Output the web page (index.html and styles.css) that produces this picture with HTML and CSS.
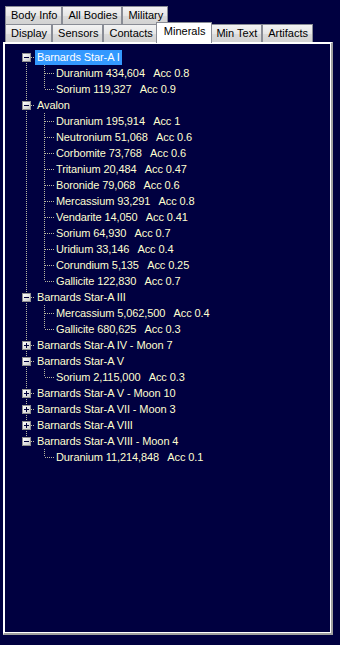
FILE: index.html
```html
<!DOCTYPE html>
<html lang="en">
<head>
    <meta charset="UTF-8" />
    <title>System View - Minerals</title>
    <link rel="stylesheet" href="styles.css">
</head>
<body>
<div class="tabs">
    <div class="tab-row">
        <div class="tab">Body Info</div>
        <div class="tab">All Bodies</div>
        <div class="tab">Military</div>
    </div>
    <div class="tab-row">
        <div class="tab">Display</div>
        <div class="tab">Sensors</div>
        <div class="tab">Contacts</div>
        <div class="tab active">Minerals</div>
        <div class="tab">Min Text</div>
        <div class="tab">Artifacts</div>
    </div>
</div>

<div class="page">
    <div class="tree-box">
        <ul class="tree">
            <li class="node">
                <div class="row"><span class="box minus"></span><span class="stub"></span><span class="label selected">Barnards Star-A I</span></div>
                <ul class="kids">
                    <li class="leaf"><span class="stub"></span><span class="label">Duranium 434,604   Acc 0.8</span></li>
                    <li class="leaf"><span class="stub"></span><span class="label">Sorium 119,327   Acc 0.9</span></li>
                </ul>
            </li>
            <li class="node">
                <div class="row"><span class="box minus"></span><span class="stub"></span><span class="label">Avalon</span></div>
                <ul class="kids">
                    <li class="leaf"><span class="stub"></span><span class="label">Duranium 195,914   Acc 1</span></li>
                    <li class="leaf"><span class="stub"></span><span class="label">Neutronium 51,068   Acc 0.6</span></li>
                    <li class="leaf"><span class="stub"></span><span class="label">Corbomite 73,768   Acc 0.6</span></li>
                    <li class="leaf"><span class="stub"></span><span class="label">Tritanium 20,484   Acc 0.47</span></li>
                    <li class="leaf"><span class="stub"></span><span class="label">Boronide 79,068   Acc 0.6</span></li>
                    <li class="leaf"><span class="stub"></span><span class="label">Mercassium 93,291   Acc 0.8</span></li>
                    <li class="leaf"><span class="stub"></span><span class="label">Vendarite 14,050   Acc 0.41</span></li>
                    <li class="leaf"><span class="stub"></span><span class="label">Sorium 64,930   Acc 0.7</span></li>
                    <li class="leaf"><span class="stub"></span><span class="label">Uridium 33,146   Acc 0.4</span></li>
                    <li class="leaf"><span class="stub"></span><span class="label">Corundium 5,135   Acc 0.25</span></li>
                    <li class="leaf"><span class="stub"></span><span class="label">Gallicite 122,830   Acc 0.7</span></li>
                </ul>
            </li>
            <li class="node">
                <div class="row"><span class="box minus"></span><span class="stub"></span><span class="label">Barnards Star-A III</span></div>
                <ul class="kids">
                    <li class="leaf"><span class="stub"></span><span class="label">Mercassium 5,062,500   Acc 0.4</span></li>
                    <li class="leaf"><span class="stub"></span><span class="label">Gallicite 680,625   Acc 0.3</span></li>
                </ul>
            </li>
            <li class="node">
                <div class="row"><span class="box plus"></span><span class="stub"></span><span class="label">Barnards Star-A IV - Moon 7</span></div>
            </li>
            <li class="node">
                <div class="row"><span class="box minus"></span><span class="stub"></span><span class="label">Barnards Star-A V</span></div>
                <ul class="kids">
                    <li class="leaf"><span class="stub"></span><span class="label">Sorium 2,115,000   Acc 0.3</span></li>
                </ul>
            </li>
            <li class="node">
                <div class="row"><span class="box plus"></span><span class="stub"></span><span class="label">Barnards Star-A V - Moon 10</span></div>
            </li>
            <li class="node">
                <div class="row"><span class="box plus"></span><span class="stub"></span><span class="label">Barnards Star-A VII - Moon 3</span></div>
            </li>
            <li class="node">
                <div class="row"><span class="box plus"></span><span class="stub"></span><span class="label">Barnards Star-A VIII</span></div>
            </li>
            <li class="node">
                <div class="row"><span class="box minus"></span><span class="stub"></span><span class="label">Barnards Star-A VIII - Moon 4</span></div>
                <ul class="kids">
                    <li class="leaf"><span class="stub"></span><span class="label">Duranium 11,214,848   Acc 0.1</span></li>
                </ul>
            </li>
        </ul>
    </div>
</div>
</body>
</html>
```

FILE: styles.css
```css
:root {
    --bg: #000040;
    --text: #ffffd0;
    --dots: #b8b8a0;
    --tab-border: #898c95;
}

* {
    box-sizing: border-box;
    margin: 0;
    padding: 0;
}

body {
    font-family: "Liberation Sans", Arial, sans-serif;
    font-size: 11px;
    background: var(--bg);
    color: var(--text);
    height: 645px;
    padding-top: 6px;
    overflow: hidden;
}

/* tab strip */
.tabs {
    padding-left: 5px;
}

.tab-row {
    display: flex;
    height: 18px;
}

.tab {
    height: 18px;
    padding: 0 4px 0 5px;
    line-height: 17px;
    color: #000;
    text-align: center;
    white-space: nowrap;
    border: 1px solid var(--tab-border);
    border-bottom: none;
    background: linear-gradient(#f3f3f3, #e6e6e6 50%, #dadada 52%, #d2d2d2);
}

.tab.active {
    position: relative;
    z-index: 2;
    height: 21px;
    margin: -2px -2px 0;
    padding: 0 6px 0 7px;
    background: #fff;
}

/* tab page */
.page {
    position: relative;
    z-index: 1;
    width: 330px;
    height: 593px;
    margin-left: 3px;
    border-style: solid;
    border-width: 1px 2px 2px 1px;
    border-color: #fff #a0a0a0 #a0a0a0 #fff;
}

.tree-box {
    height: 100%;
    border: 1px solid #fff;
    padding-top: 5px;
}

.tree,
.kids {
    list-style: none;
}

.node {
    position: relative;
}

/* vertical line joining the top level nodes */
.node::before {
    content: '';
    position: absolute;
    left: 21px;
    top: 0;
    bottom: 0;
    width: 1px;
    background: repeating-linear-gradient(var(--dots) 0 1px, transparent 1px 2px);
}

.node:first-child::before {
    top: 8px;
}

.node:last-child::before {
    bottom: auto;
    height: 9px;
}

.node:first-child:last-child::before {
    display: none;
}

.row,
.leaf {
    display: flex;
    align-items: center;
    height: 16px;
}

.row {
    padding-left: 17px;
}

.box {
    position: relative;
    z-index: 1;
    width: 9px;
    height: 9px;
    border: 1px solid #919191;
    background: linear-gradient(135deg, #fff, #e0e0e0 60%, #c8c8c8);
}

.box::before,
.box::after {
    content: '';
    position: absolute;
    background: #00003c;
}

.box::before {
    left: 1px;
    top: 3px;
    width: 5px;
    height: 1px;
}

.box.plus::after {
    left: 3px;
    top: 1px;
    width: 1px;
    height: 5px;
}

.stub {
    height: 1px;
    background: repeating-linear-gradient(90deg, var(--dots) 0 1px, transparent 1px 2px);
}

.row .stub {
    width: 4px;
}

.label {
    padding: 0 2px;
    line-height: 15px;
    white-space: pre;
    letter-spacing: -0.1px;
}

.label.selected {
    background: #3399ff;
    color: #fff;
}

/* children */
.kids {
    position: relative;
}

.kids::before {
    content: '';
    position: absolute;
    left: 39px;
    top: 0;
    bottom: 8px;
    width: 1px;
    background: repeating-linear-gradient(var(--dots) 0 1px, transparent 1px 2px);
}

.leaf {
    padding-left: 40px;
}

.leaf .stub {
    width: 9px;
}
```
